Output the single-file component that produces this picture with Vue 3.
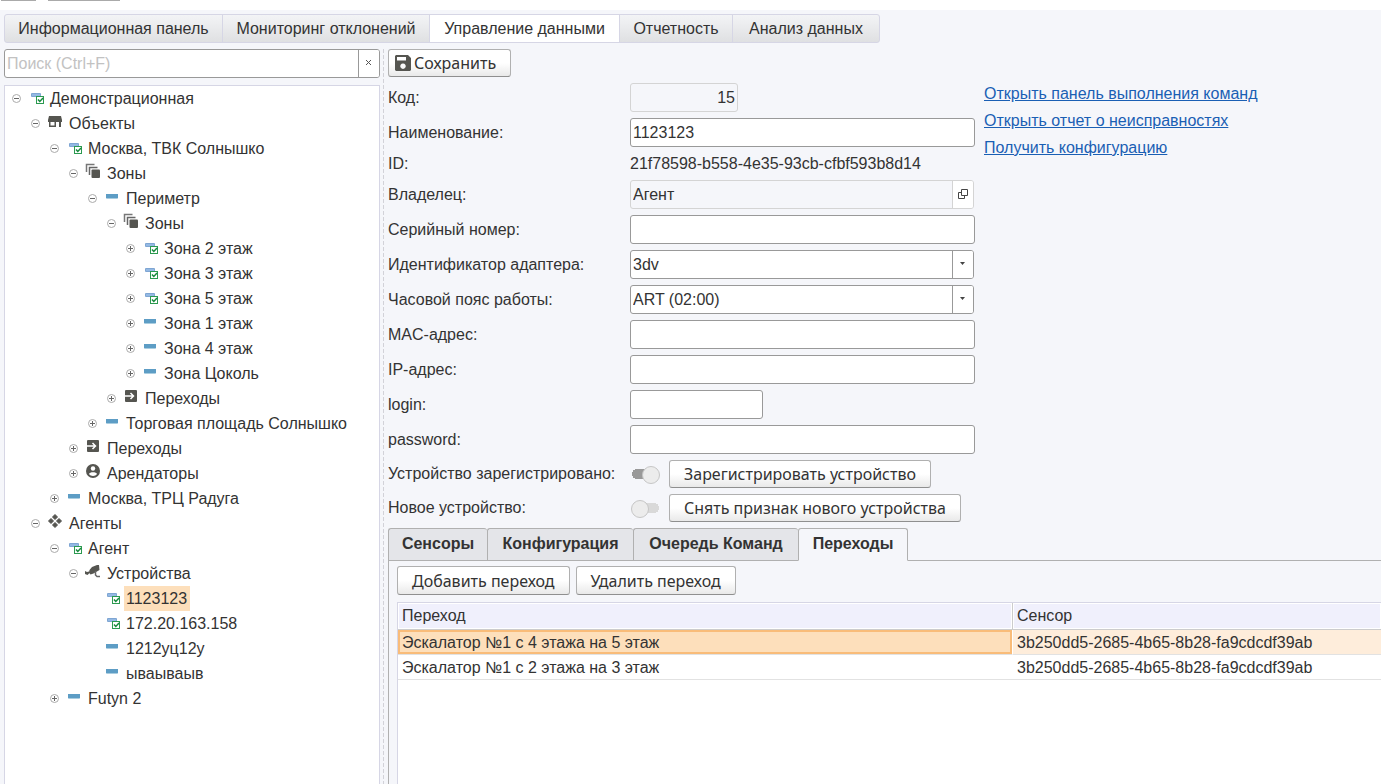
<script setup>
import { ref } from 'vue'

const mainTabs = ['Информационная панель', 'Мониторинг отклонений', 'Управление данными', 'Отчетность', 'Анализ данных']
const subTabs = ['Сенсоры', 'Конфигурация', 'Очередь Команд', 'Переходы']
const links = ['Открыть панель выполнения команд', 'Открыть отчет о неисправностях', 'Получить конфигурацию']

const activeMain = ref(2)
const activeSub = ref(3)
const search = ref('')

const nodes = [
  { level: 0, icon: 'active', text: 'Демонстрационная', open: true },
  { level: 1, icon: 'store', text: 'Объекты', open: true },
  { level: 2, icon: 'active', text: 'Москва, ТВК Солнышко', open: true },
  { level: 3, icon: 'zones', text: 'Зоны', open: true },
  { level: 4, icon: 'bar', text: 'Периметр', open: true },
  { level: 5, icon: 'zones', text: 'Зоны', open: true },
  { level: 6, icon: 'active', text: 'Зона 2 этаж', open: false },
  { level: 6, icon: 'active', text: 'Зона 3 этаж', open: false },
  { level: 6, icon: 'active', text: 'Зона 5 этаж', open: false },
  { level: 6, icon: 'bar', text: 'Зона 1 этаж', open: false },
  { level: 6, icon: 'bar', text: 'Зона 4 этаж', open: false },
  { level: 6, icon: 'bar', text: 'Зона Цоколь', open: false },
  { level: 5, icon: 'exit', text: 'Переходы', open: false },
  { level: 4, icon: 'bar', text: 'Торговая площадь Солнышко', open: false },
  { level: 3, icon: 'exit', text: 'Переходы', open: false },
  { level: 3, icon: 'user', text: 'Арендаторы', open: false },
  { level: 2, icon: 'bar', text: 'Москва, ТРЦ Радуга', open: false },
  { level: 1, icon: 'agents', text: 'Агенты', open: true },
  { level: 2, icon: 'active', text: 'Агент', open: true },
  { level: 3, icon: 'camera', text: 'Устройства', open: true },
  { level: 4, icon: 'active', text: '1123123', leaf: true },
  { level: 4, icon: 'active', text: '172.20.163.158', leaf: true },
  { level: 4, icon: 'bar', text: '1212уц12у', leaf: true },
  { level: 4, icon: 'bar', text: 'ываываыв', leaf: true },
  { level: 2, icon: 'bar', text: 'Futyn 2', open: false },
]
const selectedNode = ref(20)

const rows = [
  { name: 'Эскалатор №1 с 4 этажа на 5 этаж', sensor: '3b250dd5-2685-4b65-8b28-fa9cdcdf39ab' },
  { name: 'Эскалатор №1 с 2 этажа на 3 этаж', sensor: '3b250dd5-2685-4b65-8b28-fa9cdcdf39ab' },
]
const selectedRow = ref(0)
</script>

<template>
  <div class="page">
    <div class="top-strip"><span class="edge"></span><span class="edge edge-wide"></span></div>

    <nav class="main-tabs">
      <button v-for="(t, i) in mainTabs" :key="t" type="button" :class="{ on: i === activeMain }" @click="activeMain = i">{{ t }}</button>
    </nav>

    <div class="body">
      <aside class="side">
        <div class="search">
          <input v-model="search" type="text" placeholder="Поиск (Ctrl+F)" aria-label="Поиск">
          <button type="button" aria-label="Очистить" @click="search = ''">
            <svg width="7" height="7" viewBox="0 0 7 7"><path d="M1 1L6 6M6 1L1 6" stroke="#555" fill="none" /></svg>
          </button>
        </div>

        <ul class="tree">
          <li v-for="(n, i) in nodes" :key="i" :style="{ paddingLeft: 7 + n.level * 19 + 'px' }">
            <span v-if="n.leaf" class="toggle"></span>
            <button v-else type="button" class="toggle" :aria-label="n.open ? 'Свернуть' : 'Развернуть'">
              <svg width="9" height="9" viewBox="0 0 9 9" fill="none">
                <circle cx="4.5" cy="4.5" r="4" stroke="#aaa" />
                <path d="M2 4.5H7" stroke="#666" />
                <path v-if="!n.open" d="M4.5 2V7" stroke="#666" />
              </svg>
            </button>
            <svg class="icon" width="16" height="16" viewBox="0 0 16 16">
              <template v-if="n.icon === 'active'">
                <rect x="2" y="2" width="10" height="4" rx="1" fill="#7fa6d3" />
                <rect x="3" y="3" width="8" height="2" fill="#94b9e3" />
                <rect x="7.5" y="5.5" width="7" height="7" fill="#fff" stroke="#2b9a50" />
                <path d="M9 8.5L10.8 10.5L14 7" stroke="#168a3c" stroke-width="1.5" fill="none" />
              </template>
              <template v-else-if="n.icon === 'bar'">
                <rect x="1" y="3" width="12" height="5" rx="1" fill="#a9cde0" />
                <rect x="1" y="3" width="12" height="4" fill="#5d9dc5" />
              </template>
              <path v-else-if="n.icon === 'store'" fill="#555550" fill-rule="evenodd" d="M1 0H13L14 4V6H13V11H11V6H8V11H1V6H0V4ZM2.500 6V9.500H6.500V6Z" />
              <template v-else-if="n.icon === 'zones'">
                <path d="M.5 6V-1.500H8.500" stroke="#777" stroke-width="1.500" fill="none" />
                <path d="M3.500 9V1.500H11.500" stroke="#666" stroke-width="1.500" fill="none" />
                <rect x="5.500" y="3.500" width="8.500" height="8.500" rx="1" fill="#555550" />
              </template>
              <template v-else-if="n.icon === 'exit'">
                <rect x="1" y="-1" width="12" height="12" rx="1" fill="#555550" />
                <path d="M1 5H9.500M6.500 2L9.500 5L6.500 8" stroke="#fff" stroke-width="1.500" fill="none" />
              </template>
              <template v-else-if="n.icon === 'user'">
                <circle cx="7" cy="5" r="7" fill="#555550" />
                <circle cx="7" cy="2.500" r="2.200" fill="#fff" />
                <path d="M3 8C3.500 5.500 10.500 5.500 11 8C9.500 10.500 4.500 10.500 3 8Z" fill="#fff" />
              </template>
              <path v-else-if="n.icon === 'agents'" fill="#555550" stroke="#555550" stroke-linejoin="round" d="M7-1.500L9.500 1L7 3.500L4.500 1ZM7 6.500L9.500 9L7 11.500L4.500 9ZM3 2.500L5.500 5L3 7.500L.5 5ZM11 2.500L13.500 5L11 7.500L8.500 5Z" />
              <g v-else fill="#555550">
                <path d="M-1 5L1 6L3 5.500L3.500 7L1.500 9L-1 8ZM3.500 4L6 1L11-1L13-1L13.500 4L7.500 7.500L4.500 8.500L3 6.500Z" />
                <path d="M9.500 5V9L11 10.500H14" fill="none" stroke="#666" stroke-width="1.500" />
              </g>
            </svg>
            <button type="button" class="node" :class="{ sel: i === selectedNode }" @click="selectedNode = i">{{ n.text }}</button>
          </li>
        </ul>
      </aside>

      <div class="splitter"></div>

      <main class="detail">
        <button type="button" class="btn save">
          <svg width="16" height="16" viewBox="0 0 16 16"><path fill="#555550" fill-rule="evenodd" d="M1 0H13L16 3V15L15 16H1L0 15V1ZM2 2V5.500H11V2ZM8 8.500A2.700 2.700 0 1 0 8.010 8.500Z" /></svg>Сохранить
        </button>

        <div class="upper">
          <form class="form" @submit.prevent>
            <label for="code">Код:</label>
            <input id="code" class="field code" value="15" readonly>
            <label for="name">Наименование:</label>
            <input id="name" class="field" value="1123123">
            <span>ID:</span>
            <output class="ident">21f78598-b558-4e35-93cb-cfbf593b8d14</output>
            <label for="owner">Владелец:</label>
            <div class="combo muted">
              <input id="owner" value="Агент" readonly>
              <button type="button" aria-label="Открыть">
                <svg width="10" height="10" viewBox="0 0 10 10" fill="none" stroke="#444"><path d="M3.500 .5H9.500V6.500H3.500ZM3 3.500H.5V9.500H6.500V7" /></svg>
              </button>
            </div>
            <label for="serial">Серийный номер:</label>
            <input id="serial" class="field">
            <label for="adapter">Идентификатор адаптера:</label>
            <div class="combo">
              <select id="adapter"><option>3dv</option></select>
              <span class="arrow"><svg width="5" height="3" viewBox="0 0 5 3"><path d="M0 0H5L2.500 3Z" fill="#444" /></svg></span>
            </div>
            <label for="zone">Часовой пояс работы:</label>
            <div class="combo">
              <select id="zone"><option>ART (02:00)</option></select>
              <span class="arrow"><svg width="5" height="3" viewBox="0 0 5 3"><path d="M0 0H5L2.500 3Z" fill="#444" /></svg></span>
            </div>
            <label for="mac">MAC-адрес:</label>
            <input id="mac" class="field">
            <label for="ip">IP-адрес:</label>
            <input id="ip" class="field">
            <label for="login">login:</label>
            <input id="login" class="field login">
            <label for="password">password:</label>
            <input id="password" class="field" type="password">
            <label for="registered">Устройство зарегистрировано:</label>
            <div class="switch-row">
              <input id="registered" type="checkbox" class="switch" checked>
              <button type="button" class="btn">Зарегистрировать устройство</button>
            </div>
            <label for="fresh">Новое устройство:</label>
            <div class="switch-row">
              <input id="fresh" type="checkbox" class="switch">
              <button type="button" class="btn">Снять признак нового устройства</button>
            </div>
          </form>

          <div class="links">
            <a v-for="l in links" :key="l" href="#">{{ l }}</a>
          </div>
        </div>

        <div class="sub-tabs">
          <button v-for="(t, i) in subTabs" :key="t" type="button" :class="{ on: i === activeSub }" @click="activeSub = i">{{ t }}</button>
        </div>

        <section class="pane">
          <div class="tools">
            <button type="button" class="btn">Добавить переход</button>
            <button type="button" class="btn">Удалить переход</button>
          </div>
          <div class="grid">
            <table>
              <thead>
                <tr><th class="first">Переход</th><th>Сенсор</th></tr>
              </thead>
              <tbody>
                <tr v-for="(r, i) in rows" :key="i" :class="{ sel: i === selectedRow }" @click="selectedRow = i">
                  <td>{{ r.name }}</td>
                  <td>{{ r.sensor }}</td>
                </tr>
              </tbody>
            </table>
          </div>
        </section>
      </main>
    </div>
  </div>
</template>

<style>
body {
  background: #f5f6fa;
}
</style>

<style scoped>
.page, .page * {
  box-sizing: border-box;
}
.page {
  min-height: 100vh;
  display: flex;
  flex-direction: column;
  font: 16px/20px "Liberation Sans", Arial, sans-serif;
  color: #333;
}
button, input, select {
  font: inherit;
  color: inherit;
  margin: 0;
}
.top-strip {
  height: 10px;
  background: #fff;
  display: flex;
  gap: 12px;
  padding-left: 1px;
}
.edge {
  width: 35px;
  height: 1px;
  background: #aaa;
}
.edge-wide {
  width: 72px;
}
.main-tabs {
  display: grid;
  grid-template-columns: 218px 207px 190px 113px 146px;
  align-self: flex-start;
  margin: 4px 0 6px 4px;
  border: 1px solid #d6d6e5;
  border-radius: 3px;
  background: linear-gradient(#f3f4f6, #dfe0e2);
}
.main-tabs button {
  height: 27px;
  padding: 0;
  border: 0;
  border-right: 1px solid #d6d6e5;
  background: none;
}
.main-tabs button:last-child {
  border-right: 0;
}
.main-tabs .on {
  background: #fff;
}
.body {
  flex: 1;
  display: flex;
}
.side {
  width: 376px;
  margin-left: 4px;
  flex: none;
  display: flex;
  flex-direction: column;
  gap: 7px;
}
.search, .combo {
  display: flex;
  height: 29px;
  border: 1px solid #999;
  border-radius: 3px;
  background: #fff;
  overflow: hidden;
}
.search input, .combo input, .combo select {
  flex: 1;
  min-width: 0;
  border: 0;
  padding: 0 2px;
  background: none;
  outline: 0;
  appearance: none;
}
.search input::placeholder {
  color: #c2c2c2;
}
.search button, .combo button, .arrow {
  width: 21px;
  padding: 0 1px 2px 0;
  border: 0;
  border-left: 1px solid #999;
  background: #fff;
  display: flex;
  align-items: center;
  justify-content: center;
}
.tree {
  flex: 1;
  margin: 0;
  padding: 0;
  list-style: none;
  background: #fff;
  border: 1px solid #d6d6e5;
  border-bottom: 0;
}
.tree li {
  height: 25px;
  display: flex;
  align-items: center;
}
.toggle {
  width: 9px;
  height: 9px;
  padding: 0;
  border: 0;
  background: none;
  display: flex;
}
.icon {
  margin: 0 3px 0 8px;
  overflow: visible;
}
.node {
  height: 25px;
  padding: 0 3px 0 2px;
  border: 0;
  background: none;
  white-space: nowrap;
}
.node.sel {
  background: #fddfbb;
}
.splitter {
  width: 1px;
  margin: 0 4px 0 3px;
  background: repeating-linear-gradient(#d2d2d8 0 4px, transparent 4px 6px);
}
.detail {
  flex: 1;
  min-width: 0;
  display: flex;
  flex-direction: column;
}
.btn {
  height: 28px;
  padding: 0 14px;
  border: 1px solid #b0b0b0;
  border-bottom-color: #8f8f8f;
  border-radius: 3px;
  background: linear-gradient(#fff 50%, #e9e9e9);
  font-family: "Noto Sans", sans-serif;
  white-space: nowrap;
  line-height: 20px;
}
.save {
  align-self: flex-start;
  display: flex;
  align-items: center;
  gap: 3px;
  padding: 0 14px 0 6px;
}
.upper {
  display: flex;
  gap: 9px;
  margin: 6px 0;
}
.form {
  display: grid;
  grid-template-columns: 242px 345px;
  row-gap: 6px;
  align-items: center;
}
.form label {
  white-space: nowrap;
}
.field {
  width: 100%;
  height: 29px;
  padding: 0 2px;
  border: 1px solid #999;
  border-radius: 3px;
  background: #fff;
}
.code {
  width: 108px;
  text-align: right;
  border-color: #d4d4d4;
  background: #f5f6fa;
}
.login {
  width: 133px;
}
.ident {
  line-height: 21px;
}
.combo {
  width: 344px;
}
.combo.muted {
  background: #f5f6fa;
}
.combo.muted, .combo.muted button {
  border-color: #d4d4d4;
}
.switch-row {
  display: flex;
  align-items: center;
  gap: 8px;
}
.switch {
  appearance: none;
  width: 31px;
  height: 18px;
  flex: none;
  display: flex;
  align-items: center;
  padding: 1px 0 0 1px;
  background:
    radial-gradient(circle at 24px 9px, #d9d9d9 5px, transparent 5px),
    linear-gradient(#d9d9d9, #d9d9d9) 6px 4px / 18px 10px no-repeat;
}
.switch::before {
  content: "";
  width: 16px;
  height: 16px;
  border: 1px solid #c6c6c6;
  border-radius: 50%;
  background: #ececec;
}
.switch:checked {
  justify-content: flex-end;
  padding-right: 1px;
  background:
    radial-gradient(circle at 7px 9px, #999 5px, transparent 5px),
    linear-gradient(#999, #999) 7px 4px / 16px 10px no-repeat;
}
.links {
  display: flex;
  flex-direction: column;
  gap: 7px;
  padding-top: 1px;
}
.links a {
  color: #1a5fb4;
  text-decoration: underline;
}
.sub-tabs {
  display: grid;
  grid-template-columns: 99px 146px 165px 110px;
  height: 33px;
  border-bottom: 1px solid #b0b0b0;
}
.sub-tabs button {
  height: 33px;
  padding: 0 0 2px;
  border: 1px solid #b0b0b0;
  border-right: 0;
  border-radius: 3px 3px 0 0;
  background: #e4e5e9;
  font-weight: bold;
}
.sub-tabs button:last-child {
  border-right: 1px solid #b0b0b0;
}
.sub-tabs .on {
  background: #f5f6fa;
  border-bottom-color: #f5f6fa;
}
.pane {
  flex: 1;
  display: flex;
  flex-direction: column;
  gap: 7px;
  padding: 5px 0 0 8px;
  border-left: 1px solid #b0b0b0;
}
.tools {
  display: flex;
  gap: 6px;
}
.tools .btn {
  height: 29px;
}
.grid {
  flex: 1;
  background: #fff;
  border: 1px solid #d6d6e5;
  border-width: 1px 0 0 1px;
}
table {
  width: 100%;
  table-layout: fixed;
  border-collapse: separate;
  border-spacing: 0;
}
th {
  height: 27px;
  padding: 0 4px;
  text-align: left;
  font-weight: normal;
  background: #f0f0fc;
  border-bottom: 1px solid #ccc;
  box-shadow: inset 0 0 0 1px #fff;
}
.first {
  width: 615px;
  border-right: 1px solid #ccc;
}
td {
  height: 25px;
  padding: 2px 4px 0;
  border-bottom: 1px solid #e2e2e2;
}
.sel td {
  background: #feeddb;
  background-clip: padding-box;
}
.sel td:first-child {
  background: #fddfbb;
  background-clip: padding-box;
  border-right: 1px solid #fff;
  box-shadow: inset 0 0 0 2px #f9bc79;
}
</style>
